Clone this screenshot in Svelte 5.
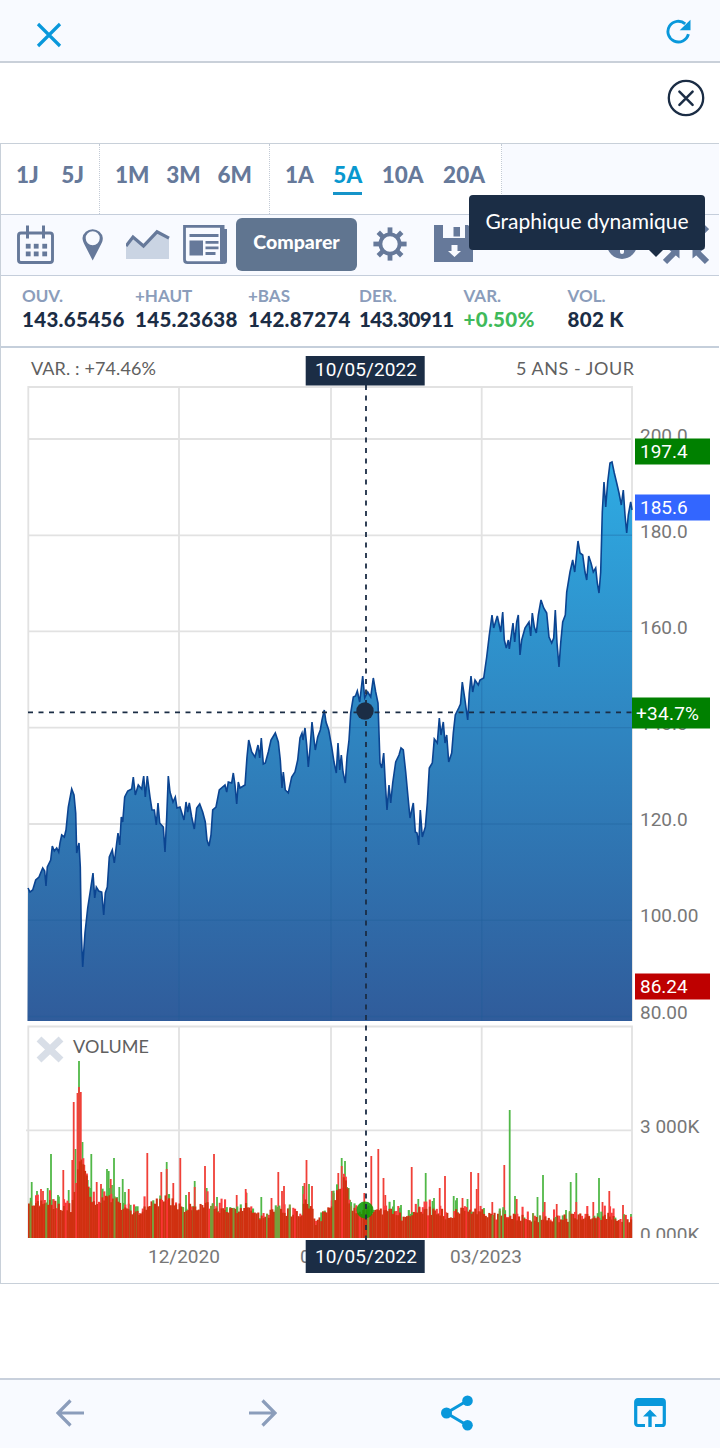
<script lang="ts">
    const groups = [
        { name: "days", items: ["1J", "5J"] },
        { name: "months", items: ["1M", "3M", "6M"] },
        { name: "years", items: ["1A", "5A", "10A", "20A"] }
    ]
    let active = "5A"

    const quotes = [
        { label: "OUV.", value: "143.65456" },
        { label: "+HAUT", value: "145.23638" },
        { label: "+BAS", value: "142.87274" },
        { label: "DER.", value: "143.30911", tight: true },
        { label: "VAR.", value: "+0.50%", up: true },
        { label: "VOL.", value: "802 K" }
    ]

    const line = "28,888 30,892 32.7,890 35.7,880 39,877 42.7,868 44.7,871 46,886 47.3,867 50.7,860 52.3,846 54.3,851 56.7,848 58.7,852 60,843 61.7,835 64.3,837 66,830 68.3,807 71.7,789 74,795 75.7,813 76.7,853 79,843 80.3,867 81.3,933 82.7,967 85,933 87.7,908 90,893 93,873 94.7,898 96.3,887 98.7,891 101.7,892 103.7,915 105.3,893 107.3,887 109.3,857 112.3,850 114.3,863 116.7,843 118,833 119.7,845 121.3,817 122.7,822 124.7,797 127.7,791 131.7,789 133.3,777 135.3,795 138.3,785 141.7,789 143.7,776 145.3,797 147.3,776 150,797 152,810 154.3,810 156.3,825 158,803 159.7,823 163.3,827 165,852 166.7,817 168.3,776 170,792 173,802 175.3,797 177,808 180,807 184,820 186,802 187.7,812 189.3,803 191.7,817 194.3,829 196.7,808 199.7,804 202.7,812 205.3,822 207,840 209,846 211,835 212.7,810 216,807 219.3,790 225,785 226.7,792 228.3,782 231.7,783 233.3,773 235,785 236.7,804 238.3,782 240,788 245,785 247,757 248.7,740 251.7,752 255,757 258,745 259.7,758 261.3,738 263.3,764 265.3,763 268.3,752 271,740 275.3,733 278.3,742 280.3,760 282,788 283.3,772 285.3,790 288.3,793 291.7,777 295,772 297.7,760 300,738 302,733 303,740 305,728 306.7,745 308.3,767 310.3,745 312,722 313.7,737 315.3,750 317.7,737 320.3,730 322,720 324.3,710 326,722 328.7,730 331.7,747 334,762 336.3,773 338,743 339.7,770 341.3,755 343,772 345.3,783 347,757 349,740 350.7,713 353.3,697 355.5,696 357.3,691 359.7,702 362.7,676 364.7,698 367.7,692 370.7,697 373.3,678 375.7,692 378,703 380,763 381.7,768 383.7,753 385.3,783 387,810 389,785 390.7,803 392.7,783 395.7,762 399,755 401,748 403.3,750 405.7,772 408,797 410,818 413.3,803 415.3,832 417,833 418.7,845 420.3,810 422.3,837 425.3,827 427.3,803 429.3,768 432.3,763 434.3,739 437.3,743 439.3,718 441,735 443.3,722 445,743 446.7,735 448.7,762 451.7,753 453.3,733 455.3,715 458.7,708 460.5,704 462.3,682 464.7,698 467.7,720 469.3,693 471,676 472.7,692 475,680 478.3,685 480,680 483.7,678 486.7,657 489.3,635 492,615 493.7,628 497.3,616 500.7,632 502.7,612 504.3,640 506.3,648 508.3,640 509.3,649 513,623 514.7,642 516.7,622 518.3,615 520,655 521.7,640 525,628 529,622 530.7,636 532.3,613 534.3,627 536.3,633 538.3,615 541,600 543.7,608 546.7,613 549,637 551.7,643 553.7,638 555.3,610 557,643 559,667 560.7,643 562.7,622 565.3,615 566.7,592 570,572 572.7,560 574.7,572 576.7,553 578,541 580,553 582.7,555 585,572 586.7,580 588.7,556 591,563 593.3,572 595.7,568 597.3,583 599,593 600.7,572 602.3,512 604,482 605.7,507 607.7,482 610,463 612,462 614.3,473 616.7,483 619,493 621.3,505 623.3,490 625,515 626.7,533 628.3,515 630.7,502 632,510"

    const base = 1238

    // typical top of the volume bars along the time axis
    const envelope = [
        [28, 1208], [40, 1203], [60, 1206], [70, 1208], [76, 1175], [79, 1160], [84, 1172], [90, 1196], [96, 1206], [106, 1196], [118, 1204], [134, 1213],
        [150, 1206], [165, 1198], [182, 1209], [200, 1205], [230, 1212], [245, 1205], [260, 1216], [280, 1211], [300, 1214], [306, 1200],
        [316, 1223], [328, 1207], [338, 1190], [344, 1180], [350, 1208], [366, 1212], [385, 1210], [400, 1217], [415, 1210],
        [440, 1212], [449, 1219], [460, 1208], [480, 1213], [500, 1216], [550, 1220], [590, 1216], [610, 1217], [631, 1218]
    ]

    // [x, top]
    const redSpikes = [
        [41, 1189], [43, 1191], [63.3, 1170], [72.3, 1160], [73.7, 1102], [77.5, 1093], [79, 1087], [80.8, 1092], [84.3, 1165], [86, 1175], [96.7, 1182], [101, 1184],
        [110.7, 1179], [128.7, 1189], [147.3, 1153], [161.3, 1172], [166.7, 1169], [173.3, 1183], [180.3, 1158], [189, 1192], [194.7, 1187], [205, 1166], [214, 1154],
        [236.7, 1195], [245.7, 1189], [271.5, 1198], [278.3, 1172], [282, 1191], [284, 1186], [304.5, 1183], [306.5, 1160], [312, 1186], [332, 1191], [338.3, 1173], [341.7, 1166], [343.5, 1177],
        [364.3, 1193], [371.3, 1156], [378.3, 1149], [383.5, 1178], [385.3, 1195], [411.7, 1167], [439.7, 1188], [445, 1176], [462.5, 1198], [471, 1172],
        [476.7, 1189], [478.3, 1173], [492.3, 1202], [504.3, 1165], [516.7, 1199], [544.7, 1202], [556.7, 1204], [576.3, 1202], [593.3, 1202], [602.5, 1202], [609.3, 1191], [623, 1205]
    ]
    const greenSpikes = [
        [31.7, 1182], [37, 1191], [47.7, 1188], [51, 1154], [58, 1195], [68.7, 1190], [75.5, 1149], [79, 1061], [82.5, 1142], [87.7, 1180], [91.3, 1154],
        [107, 1169], [108.7, 1171], [112, 1185], [114, 1158], [117, 1197], [119.3, 1187], [122.7, 1179], [125, 1192], [166.7, 1162], [186, 1195], [194.7, 1181], [206.7, 1188], [217, 1197],
        [246.5, 1193], [261.3, 1197], [303, 1186], [309, 1184], [341.7, 1158], [345, 1161], [347, 1187], [348.7, 1188], [350, 1200], [394, 1200], [401, 1205], [418.3, 1199], [425.7, 1173],
        [432.5, 1201], [434, 1198], [453.7, 1196], [457, 1198], [467.5, 1199], [484, 1208], [509.7, 1110], [515, 1196], [537.5, 1197], [543, 1175], [566, 1210], [570.7, 1182], [576.3, 1173], [599, 1178], [631, 1214]
    ]

    let seed = 11
    function rand() {
        seed = (seed * 16807) % 2147483647
        return seed / 2147483647
    }

    function level(x: number) {
        let i = 1
        while(i < envelope.length - 1 && envelope[i][0] < x) i++
        const [x0, y0] = envelope[i - 1]
        const [x1, y1] = envelope[i]
        return y0 + (y1 - y0) * (x - x0) / (x1 - x0)
    }

    const bars: { x: number, y: number, color: string }[] = []
    for(let x = 28; x < 631; x += 1.75) {
        const top = level(x) + (rand() - 0.5) * 9
        const r = rand()
        if(r < 0.2) bars.push({ x, y: top - rand() * 9, color: "#51b848" })
        else if(r < 0.42) bars.push({ x, y: top - rand() * 11, color: "#fa3f3f" })
        const stripe = r < 0.08 ? "#7d9a3a" : r > 0.93 ? "#fa3535" : "#d03010"
        bars.push({ x, y: r < 0.08 ? top - 4 : top, color: stripe })
    }

    const priceLabels = [["200.0", 442], ["180.0", 538], ["160.0", 634], ["140.0", 730], ["120.0", 826], ["100.00", 922], ["80.00", 1019]]
    const rows = [439, 535.3, 631.4, 727.6, 824, 920.3, 1016.5]
    const columns = [179, 331, 481.7]
</script>

<div class="page">
    <header class="topbar">
        <svg width="26" height="26" viewBox="0 0 26 26"><path d="M2 2 24 24M24 2 2 24" stroke="#0998db" stroke-width="3.2" fill="none" /></svg>
        <svg class="reload" width="26" height="26" viewBox="665 18 26 26">
            <path d="M688.4 34.2A10.4 10.4 0 1 1 685.2 23.8" stroke="#0998db" stroke-width="2.9" fill="none" />
            <path d="M690.5 19.7V30.3H679.7Z" fill="#0998db" />
        </svg>
    </header>

    <div class="dismiss">
        <svg width="38" height="38" viewBox="0 0 38 38" fill="none" stroke="#1b2d45">
            <circle cx="19" cy="19" r="17.2" stroke-width="2.3" />
            <path d="m12.4 12.6 13.2 13.2m0-13.2L12.4 25.8" stroke-width="2.5" stroke-linecap="round" />
        </svg>
    </div>

    <section class="widget">
        <nav class="periods">
            {#each groups as group}
                <div class="group {group.name}">
                    {#each group.items as item}
                        <button class="period" class:active={item == active} on:click={() => active = item}>{item}</button>
                    {/each}
                </div>
            {/each}
        </nav>

        <div class="toolbar">
            <svg width="38" height="60" viewBox="17 215 38 60">
                <rect x="18.5" y="233" width="34" height="29.5" rx="2.5" fill="none" stroke="#66799a" stroke-width="2.9" />
                <path d="M27.5 225.5v13M43.5 225.5v13" stroke="#66799a" stroke-width="3" />
                {#each [28, 36, 44.5] as x}
                    {#each [246, 253.7] as y}
                        <rect x={x - 2.2} y={y - 2.2} width="4.8" height="4.8" fill="#66799a" />
                    {/each}
                {/each}
            </svg>
            <svg class="pin" width="22" height="60" viewBox="82 215 22 60">
                <path fill-rule="evenodd" d="M92.7 260.5 84.2 244C82.4 240.5 82.5 238 82.5 238A10.2 9.8 0 0 1 102.8 238C102.8 240.5 102.3 242 101.2 244ZM92.7 231.2A7 7 0 1 0 92.7 245.2A7 7 0 1 0 92.7 231.2Z" fill="#66799a" />
            </svg>
            <svg class="area" width="44" height="60" viewBox="126 215 44 60">
                <path d="M126 246 133 237 143.5 245.5 158 232 169 238.5V259H126Z" fill="#cad4e3" />
                <path d="M126 246 133 237 143.5 246 157 231.8 169 238.2" fill="none" stroke="#66799a" stroke-width="3.2" />
            </svg>
            <svg class="news" width="44" height="60" viewBox="183 215 44 60">
                <path d="M221.5 226.3H184.5V259.5Q184.5 262.7 187.5 262.7H223" fill="none" stroke="#66799a" stroke-width="2.8" />
                <path d="M220 225h4.500v4h2.500v32q0 3-3 3-4-1-4-4Z" fill="#66799a" />
                <path d="M189.5 235.5h29M205.5 242.3h13M205.5 247.8h13M205.5 253.5h10" stroke="#66799a" stroke-width="2.8" />
                <rect x="189.5" y="240.5" width="13.5" height="15" fill="#66799a" />
            </svg>
            <button class="compare">Comparer</button>
            <svg class="gear" width="34" height="60" viewBox="-17 -30 34 60">
                <circle cy="-1" r="9.6" fill="none" stroke="#66799a" stroke-width="3.8" />
                {#each [0, 45, 90, 135, 180, 225, 270, 315] as angle}
                    <path d="M-2.4-16.6h4.800v6.500h-4.800Z" transform="translate(0 -1) rotate({angle})" fill="#66799a" />
                {/each}
            </svg>
            <svg class="save" width="39" height="60" viewBox="434 215 39 60">
                <path fill-rule="evenodd" d="M434 225h9v13h22v-13h3l5 5v32h-39ZM451.500 245v6h-3.500l6.500 6 6.500-6h-3.500v-6Z" fill="#66799a" />
                <rect x="453.500" y="227" width="6.500" height="9.500" fill="#66799a" />
            </svg>
            <svg class="info" width="30" height="60" viewBox="607 215 30 60">
                <circle cx="622" cy="244" r="15" fill="#66799a" />
                <path d="M622 242v10" stroke="#f8faff" stroke-width="4" stroke-linecap="round" />
            </svg>
            <svg class="shrink" width="46" height="60" viewBox="663 215 46 60">
                <path d="m665 262 10-10m32 10-10-10M665 227l10 10m32-10-10 10" stroke="#66799a" stroke-width="6" />
                <path d="M667 248h12.5v10.5ZM705 248h-12.5v10.5Z" fill="#66799a" />
            </svg>
            <div class="tooltip">Graphique dynamique</div>
        </div>

        <div class="quotes">
            {#each quotes as quote}
                <div class="quote">
                    <span class="label">{quote.label}</span>
                    <span class="value" class:up={quote.up} class:tight={quote.tight}>{quote.value}</span>
                </div>
            {/each}
        </div>

        <svg class="chart" width="718" height="934" viewBox="1 348 718 934">
            <defs>
                <linearGradient id="fill" gradientUnits="userSpaceOnUse" x1="0" y1="462" x2="0" y2="1021">
                    <stop offset="0" stop-color="#2eabe3" />
                    <stop offset="1" stop-color="#305c9b" />
                </linearGradient>
                <clipPath id="volume-axis"><rect x="634" y="1026" width="84" height="212" /></clipPath>
            </defs>

            <text class="caption" x="31" y="375" textLength="125">VAR. : +74.46%</text>
            <text class="caption" x="516" y="375" textLength="118">5 ANS - JOUR</text>

            <g class="grid">
                <path d="M28.3 1021V387H632V1021M26 1130.3H632M28.3 1238V1026.5H632V1238" />
                {#each columns as x}
                    <path d="M{x} 387V1021M{x} 1027V1238" />
                {/each}
                {#each rows as y}
                    <path d="M28 {y}H632" />
                {/each}
            </g>
            <polygon points="27.5,1021 {line} 632,1021" fill="url(#fill)" />
            <!-- faint grid on the filled area -->
            <clipPath id="area"><polygon points="28,1021 {line} 632,1021" /></clipPath>
            <g class="shade" clip-path="url(#area)">
                {#each columns as x}
                    <path d="M{x} 387V1021" />
                {/each}
                {#each rows as y}
                    <path d="M28 {y}H632" />
                {/each}
            </g>
            <polyline points={line} class="price" />

            {#each greenSpikes as [x, y]}
                <rect x={x - 0.9} {y} width="1.8" height={base - y} fill="#51b848" />
            {/each}
            {#each redSpikes as [x, y]}
                <rect x={x - 0.9} {y} width="1.8" height={base - y} fill="#f04038" />
            {/each}
            {#each bars as bar}
                <rect x={bar.x} y={bar.y} width="2.1" height={base - bar.y} fill={bar.color} />
            {/each}

            <path d="m39 1039 22 21m0-21-22 21" stroke="#d8dee7" stroke-width="7" />
            <text class="caption" x="73" y="1053" textLength="76">VOLUME</text>

            <circle cx="365" cy="1210" r="8.5" fill="#109b05" opacity=".88" />
            <g class="cross">
                <path d="M366 385V1240" />
                <path d="M28 712.3H632" />
            </g>
            <circle cx="365" cy="711" r="8.7" fill="#1b2d45" />

            <g class="axis">
                {#each priceLabels as [text, y]}
                    <text x="640" {y}>{text}</text>
                {/each}
                <text x="640" y="1132.5">3 000K</text>
                <text x="640" y="1241" clip-path="url(#volume-axis)">0 000K</text>
                <text x="148" y="1262.5">12/2020</text>
                <text x="300" y="1262.5">0</text>
                <text x="450" y="1262.5">03/2023</text>
            </g>

            <g class="tags">
                <rect x="635" y="438.5" width="75" height="26" fill="#008000" />
                <text x="640" y="457.5">197.4</text>
                <rect x="635" y="494.5" width="75" height="26" fill="#3366ff" />
                <text x="640" y="513.5">185.6</text>
                <rect x="632" y="697.5" width="78" height="31" fill="#008000" />
                <text x="636" y="719.5" textLength="63">+34.7%</text>
                <rect x="635" y="973.5" width="75" height="26" fill="#be0000" />
                <text x="640" y="992.5">86.24</text>
                <rect x="305.7" y="356" width="119" height="29.5" fill="#1b2d45" />
                <text x="315" y="375.5" textLength="102">10/05/2022</text>
                <rect x="305.7" y="1240" width="119" height="33" fill="#1b2d45" />
                <text x="315" y="1262.5" textLength="102">10/05/2022</text>
            </g>
        </svg>
    </section>

    <footer class="bottombar">
        <svg width="28" height="28" viewBox="0 0 28 28"><path d="M28 14H2M14.5 1.5 2 14l12.5 12.5" fill="none" stroke="#8b9dbb" stroke-width="3.2" /></svg>
        <svg class="forward" width="28" height="28" viewBox="0 0 28 28"><path d="M0 14h26M13.5 1.5 26 14 13.5 26.5" fill="none" stroke="#8b9dbb" stroke-width="3.2" /></svg>
        <svg class="share" width="32" height="36" viewBox="0 0 32 36">
            <path d="M26.5 5.5 5.5 18l21 12.5" fill="none" stroke="#0998db" stroke-width="3" />
            <g fill="#0998db"><circle cx="26.5" cy="5.7" r="5.3" /><circle cx="5.5" cy="18" r="5.5" /><circle cx="26.5" cy="30.3" r="5.3" /></g>
        </svg>
        <svg class="open" width="32" height="30" viewBox="0 0 32 30">
            <path d="M11 27.5H4Q1.7 27.5 1.7 25.2V4Q1.7 1.7 4 1.7H28Q30.3 1.7 30.3 4V25.200Q30.3 27.5 28 27.5H21" fill="none" stroke="#0998db" stroke-width="3.2" />
            <path d="M2 1h28v7H2ZM16 11.5l7 7h-5.3V29h-3.400V18.5H9Z" fill="#0998db" />
        </svg>
    </footer>
</div>

<style>
    :global(body) {
        background-color: #fff;
    }
    .page {
        width: 720px;
        height: 1448px;
        display: flex;
        flex-direction: column;
        box-sizing: border-box;
        font-family: Lato, "Liberation Sans", sans-serif;
        overflow: hidden;
    }
    svg {
        display: block;
        flex: none;
    }
    button {
        border: none;
        background: none;
        padding: 0;
        font-family: inherit;
    }
    .topbar {
        display: flex;
        justify-content: space-between;
        height: 63px;
        padding: 22px 29px 0 36px;
        box-sizing: border-box;
        background-color: #f8faff;
        border-bottom: 2px solid #c9d0d9;
    }
    .reload {
        margin-top: -4px;
    }
    .dismiss {
        display: flex;
        justify-content: flex-end;
        height: 80px;
        padding: 16px 15px 0 0;
        box-sizing: border-box;
    }
    .widget {
        width: 719px;
        height: 1141px;
        box-sizing: border-box;
        border: 1px solid #c8d0d9;
        border-right: none;
    }
    .periods {
        display: flex;
        height: 70px;
        background-color: #f8faff;
    }
    .group {
        display: flex;
        align-items: flex-start;
        justify-content: space-between;
        padding: 17px 17px 0 15px;
        box-sizing: border-box;
        background-color: #fff;
        border-right: 1px dotted #c3cbd6;
    }
    .days {
        width: 99px;
        padding-right: 15px;
    }
    .months {
        width: 170px;
    }
    .years {
        width: 232px;
        padding-right: 16px;
    }
    .period {
        height: 34px;
        padding-bottom: 5px;
        box-sizing: border-box;
        color: #66799a;
        font-size: 22.5px;
        font-weight: 900;
        line-height: 28px;
        border-bottom: 3px solid transparent;
    }
    .active {
        color: #0998cf;
        border-color: #1694c9;
    }
    .toolbar {
        position: relative;
        display: flex;
        height: 60px;
        padding-left: 16px;
        background-color: #f8faff;
        border-top: 1px solid #c5cedb;
        border-bottom: 1px solid #c5cedb;
    }
    .pin {
        margin-left: 27px;
    }
    .area {
        margin-left: 22px;
    }
    .news {
        margin-left: 13px;
    }
    .compare {
        width: 121px;
        height: 53px;
        margin: 3px 0 0 9px;
        padding-bottom: 7px;
        border-radius: 6px;
        color: #fff;
        background-color: #607590;
        font-size: 19.5px;
        font-weight: 900;
    }
    .gear {
        margin-left: 16px;
    }
    .save {
        margin-left: 27px;
    }
    .info {
        margin-left: 134px;
    }
    .shrink {
        margin-left: 26px;
    }
    .tooltip {
        position: absolute;
        top: -20px;
        left: 468px;
        width: 236px;
        height: 55px;
        line-height: 51px;
        text-align: center;
        font-size: 21px;
        color: #fff;
        background-color: #1b2d45;
        border-radius: 4px;
    }
    .tooltip::after {
        content: "";
        position: absolute;
        top: 55px;
        left: 180px;
        border: 7px solid transparent;
        border-top-color: #1b2d45;
    }
    .quotes {
        display: grid;
        grid-template-columns: 113px 113px 111px 104.5px 104px 1fr;
        height: 72px;
        padding: 9px 0 0 21px;
        box-sizing: border-box;
        border-bottom: 2px solid #c5cfdb;
    }
    .quote {
        display: flex;
        flex-direction: column;
        white-space: nowrap;
    }
    .label {
        color: #8b9dbb;
        font-size: 17px;
        font-weight: 700;
        line-height: 22px;
    }
    .value {
        color: #1b2d45;
        font-size: 20.5px;
        font-weight: 900;
        line-height: 24px;
        letter-spacing: .3px;
    }
    .tight {
        letter-spacing: -.6px;
    }
    .up {
        color: #3fba5b;
    }
    .caption {
        font-size: 18px;
        fill: #606060;
    }
    .grid path {
        fill: none;
        stroke: #e2e2e2;
        stroke-width: 1.8;
    }
    .shade path {
        stroke: #1d5c96;
        stroke-width: 1.4;
        opacity: .28;
    }
    .price {
        fill: none;
        stroke: #0b4491;
        stroke-width: 1.6;
    }
    .cross path {
        fill: none;
        stroke: #1b2d45;
        stroke-width: 1.8;
        stroke-dasharray: 5 5.5;
    }
    .axis text, .tags text {
        font-family: Roboto, "Liberation Sans", sans-serif;
        font-size: 19px;
    }
    .axis text {
        fill: #777;
    }
    .tags text {
        fill: #fff;
    }
    .bottombar {
        display: flex;
        align-items: center;
        justify-content: space-between;
        height: 70px;
        margin-top: auto;
        padding: 0 54px 2px 56px;
        box-sizing: border-box;
        background-color: #f8faff;
        border-top: 2px solid #c8d0dc;
    }
    .forward, .share {
        margin-right: -2px;
        margin-left: 2px;
    }
</style>
